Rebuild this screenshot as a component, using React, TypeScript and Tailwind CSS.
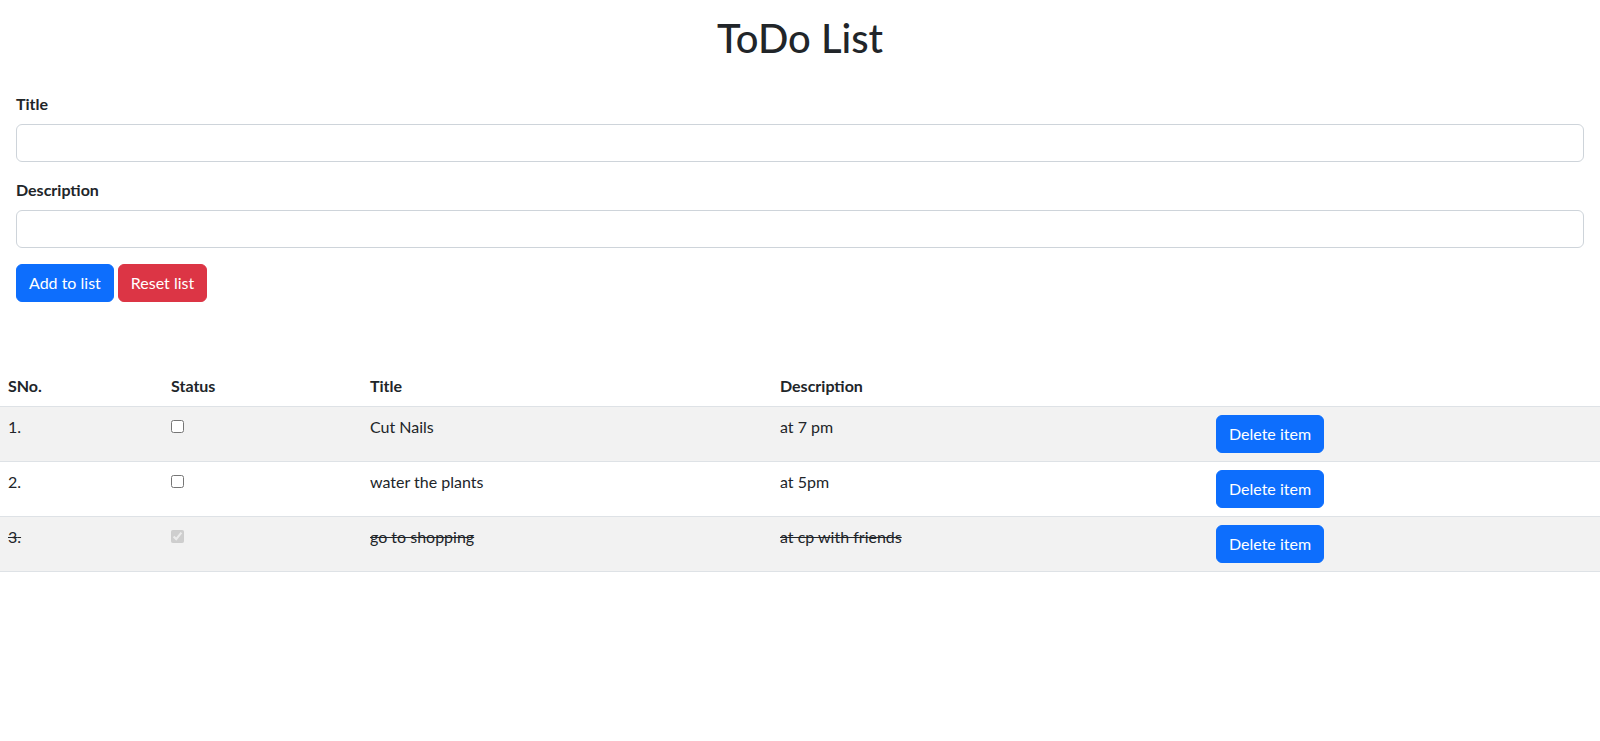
import React, { useState } from 'react'

interface Todo {
  sno: number
  title: string
  desc: string
  done: boolean
}

const initialTodos: Todo[] = [
  { sno: 1, title: 'Cut Nails', desc: 'at 7 pm', done: false },
  { sno: 2, title: 'water the plants', desc: 'at 5pm', done: false },
  { sno: 3, title: 'go to shopping', desc: 'at cp with friends', done: true },
]

export default function App() {
  const [todos, setTodos] = useState<Todo[]>(initialTodos)
  const [title, setTitle] = useState('')
  const [desc, setDesc] = useState('')

  const addItem = () => {
    if (!title.trim()) return
    setTodos([...todos, { sno: todos.length + 1, title, desc, done: false }])
    setTitle('')
    setDesc('')
  }

  const toggle = (i: number) => {
    setTodos(todos.map((t, idx) => (idx === i ? { ...t, done: !t.done } : t)))
  }

  const remove = (i: number) => {
    setTodos(todos.filter((_, idx) => idx !== i).map((t, idx) => ({ ...t, sno: idx + 1 })))
  }

  return (
    <div className="min-h-screen bg-white font-['Segoe_UI',Lato,sans-serif] text-base leading-6 text-[#212529]">
      {/* heading */}
      <h1 className="pt-[14px] text-center text-[40px] font-medium leading-[48px]">ToDo List</h1>

      {/* form */}
      <div className="px-4 pt-[30px]">
        <label className="mb-2 block font-bold">Title</label>
        <input
          value={title}
          onChange={(e) => setTitle(e.target.value)}
          className="mb-4 block h-[38px] w-full rounded-md border border-[#ced4da] px-3 py-1.5 outline-none"
        />
        <label className="mb-2 block font-bold">Description</label>
        <input
          value={desc}
          onChange={(e) => setDesc(e.target.value)}
          className="mb-4 block h-[38px] w-full rounded-md border border-[#ced4da] px-3 py-1.5 outline-none"
        />
        <div className="flex gap-1">
          <button
            onClick={addItem}
            className="h-[38px] rounded-md border border-[#0d6efd] bg-[#0d6efd] px-3 text-white"
          >
            Add to list
          </button>
          <button
            onClick={() => setTodos([])}
            className="h-[38px] rounded-md border border-[#dc3545] bg-[#dc3545] px-3 text-white"
          >
            Reset list
          </button>
        </div>
      </div>

      {/* table */}
      <table className="mt-[64px] w-full border-collapse text-left">
        <thead>
          <tr className="border-b border-[#dee2e6]">
            <th className="w-[163px] p-2 align-top font-bold">SNo.</th>
            <th className="w-[199px] p-2 align-top font-bold">Status</th>
            <th className="w-[410px] p-2 align-top font-bold">Title</th>
            <th className="w-[436px] p-2 align-top font-bold">Description</th>
            <th className="p-2"></th>
          </tr>
        </thead>
        <tbody>
          {todos.map((t, i) => (
            <tr key={t.sno} className={`border-b border-[#dee2e6] ${i % 2 === 0 ? 'bg-[#f2f2f2]' : 'bg-white'}`}>
              <td className={`p-2 align-top ${t.done ? 'line-through' : ''}`}>{t.sno}.</td>
              <td className="p-2 align-top">
                <input
                  type="checkbox"
                  checked={t.done}
                  disabled={t.done}
                  onChange={() => toggle(i)}
                  className="m-0 mt-[5px] block h-[13px] w-[13px]"
                />
              </td>
              <td className={`p-2 align-top ${t.done ? 'line-through' : ''}`}>{t.title}</td>
              <td className={`p-2 align-top ${t.done ? 'line-through' : ''}`}>{t.desc}</td>
              <td className="p-2 align-top">
                <button
                  onClick={() => remove(i)}
                  className="h-[38px] rounded-md border border-[#0d6efd] bg-[#0d6efd] px-3 text-white"
                >
                  Delete item
                </button>
              </td>
            </tr>
          ))}
        </tbody>
      </table>
    </div>
  )
}
